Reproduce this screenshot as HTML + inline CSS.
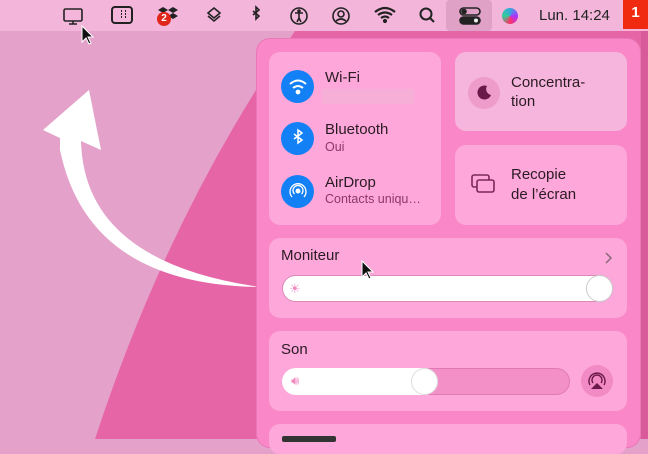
<!DOCTYPE html>
<html><head><meta charset="utf-8"><style>
*{margin:0;padding:0;box-sizing:border-box}
body{width:648px;height:439px;overflow:hidden;position:relative;font-family:"Liberation Sans",sans-serif;background:#e4a2ca}
.bar{position:absolute;left:0;top:0;width:648px;height:31px;background:#f3b6da;}
.panel{position:absolute;left:256px;top:38px;width:385px;height:410px;background:#fa88c8;border-radius:14px;border:1px solid #e978b8}
.card{position:absolute;background:#fda7da;border-radius:11px}
.t{position:absolute;color:#2a1a22;font-size:15px}
.s{position:absolute;color:#8a3a68;font-size:12.5px}
.ic{position:absolute;width:33px;height:33px;border-radius:50%;background:#1380f5}
</style></head><body>
<svg style="position:absolute;left:0;top:0" width="648" height="439">
<path d="M295,31 Q170,210 95,439 L648,439 L648,31 Z" fill="#e665a6"/>
<path d="M260,287 Q88,285 60,150 L60,138 L43,130 L89,90 L101,150 L81,141 Q84,262 260,287 Z" fill="#fff"/>
</svg>
<div class="bar"></div>
<div style="position:absolute;left:446px;top:0;width:46px;height:31px;background:#dfa2c6;border-radius:4px"></div>
<svg style="position:absolute;left:0;top:0" width="648" height="31" fill="none" stroke="#222" stroke-width="1.6">
<rect x="64" y="9" width="18" height="12" rx="1.5"/><path d="M73 21v3M69 24h8"/>
<rect x="112" y="7" width="20" height="16" rx="3" stroke-width="2"/><path d="M121 11h1M125 11h1M125 14h1M125 17h1M121 17h1M121 14h1" stroke-width="2"/>
<path d="M163 7l5 3-5 3-5-3zM173 7l5 3-5 3-5-3zM163 13l5 3-5 3-5-3zM173 13l5 3-5 3-5-3z" fill="#222" stroke="none"/>
<path d="M214 8l6 5-6 5-6-5zM208 16l6 5 6-5"/>
<path d="M253 11l6 5-3 3V7l3 3-6 5"/>
<circle cx="299" cy="16" r="8"/><path d="M295 13h8M299 13v5l-2 4M299 18l2 4"/><circle cx="299" cy="11" r="1" fill="#222"/>
<circle cx="341" cy="16" r="8"/><circle cx="341" cy="14" r="3"/><path d="M336 21q5-4 10 0"/>
<path d="M375 12q10-8 20 0M378 15q7-5 14 0M381 18q4-3 8 0" stroke-width="2.2"/><circle cx="385" cy="21" r="1.3" fill="#222"/>
<circle cx="426" cy="14" r="5.5" stroke-width="2"/><path d="M430 18l4 4" stroke-width="2"/>
<rect x="460" y="8" width="20" height="7" rx="3.5"/><rect x="460" y="17" width="20" height="7" rx="3.5" fill="#222"/><circle cx="464" cy="11.5" r="2" fill="#222"/><circle cx="476" cy="20.5" r="2" fill="#eee" stroke="none"/>
</svg>
<div style="position:absolute;left:157px;top:12px;width:14px;height:14px;border-radius:50%;background:#e0261a;color:#fff;font-size:10px;font-weight:bold;text-align:center;line-height:14px">2</div>
<div style="position:absolute;left:502px;top:8px;width:16px;height:16px;border-radius:50%;background:conic-gradient(#3ad,#a3f,#f36,#3c9,#3ad)"></div>
<div style="position:absolute;left:539px;top:7px;font-size:15px;color:#222">Lun. 14:24</div>
<div style="position:absolute;left:623px;top:0;width:25px;height:29px;background:#f02a10;color:#fff;font-weight:bold;font-size:15px;text-align:center;line-height:26px">1</div>
<div style="position:absolute;left:641px;top:31px;width:7px;height:408px;background:#d85a9a"></div>
<div class="panel"></div>
<div class="card" style="left:269px;top:52px;width:172px;height:173px"></div>
<div class="card" style="left:455px;top:52px;width:172px;height:79px;background:#f6b5dc"></div>
<div class="card" style="left:455px;top:145px;width:172px;height:80px"></div>
<div class="card" style="left:269px;top:238px;width:358px;height:80px"></div>
<div class="card" style="left:269px;top:331px;width:358px;height:80px"></div>
<div class="card" style="left:269px;top:424px;width:358px;height:30px"></div>
<div style="position:absolute;left:282px;top:436px;width:54px;height:6px;background:#333;border-radius:2px"></div>
<div class="ic" style="left:281px;top:70px"></div>
<div class="ic" style="left:281px;top:122px"></div>
<div class="ic" style="left:281px;top:175px"></div>
<svg style="position:absolute;left:0;top:0" width="648" height="439" fill="none" stroke="#fff" stroke-width="2">
<path d="M290 84q8-7 16 0M293 88q5-4 10 0"/><circle cx="298" cy="92" r="1.4" fill="#fff"/>
<path d="M294 134l8 6-4 3v-13l4 3-8 6" stroke-width="1.5"/>
<path d="M292 197a8 8 0 1 1 12 0M294.5 194a5 5 0 1 1 7 0" stroke-width="1.3"/><circle cx="298" cy="191" r="1.5" fill="#fff"/>
<circle cx="484" cy="93" r="16" fill="#ee9cc9" stroke="none"/>
<path d="M487 86a7 7 0 1 0 4 9a6 6 0 0 1-4-9z" fill="#6a1a48" stroke="none"/>
<rect x="472" y="175" width="17" height="12" rx="2" stroke="#7a2a58" stroke-width="1.6"/><rect x="477" y="180" width="17" height="12" rx="2" stroke="#7a2a58" stroke-width="1.6" fill="#fda7da"/>
<path d="M606 253l5 5-5 5" stroke="#8a6a7a" stroke-width="1.5"/>
<circle cx="597" cy="381" r="16" fill="#f28ac5" stroke="none"/>
<path d="M590 385a8 8 0 1 1 14 0M593 383a5 5 0 1 1 8 0" stroke="#6a1a48" stroke-width="1.4"/><path d="M591 389l6-6 6 6z" fill="#6a1a48" stroke="none"/>
</svg>
<div class="t" style="left:325px;top:69px">Wi-Fi</div>
<div style="position:absolute;left:322px;top:89px;width:92px;height:15px;background:#f6b0d8"></div>
<div class="t" style="left:325px;top:121px">Bluetooth</div>
<div class="s" style="left:325px;top:140px">Oui</div>
<div class="t" style="left:325px;top:174px">AirDrop</div>
<div class="s" style="left:325px;top:192px">Contacts uniqu…</div>
<div class="t" style="left:511px;top:73px;line-height:19px">Concentra-<br>tion</div>
<div class="t" style="left:511px;top:165px;line-height:20px">Recopie<br>de l’écran</div>
<div class="t" style="left:281px;top:247px">Moniteur</div>
<div style="position:absolute;left:282px;top:275px;width:331px;height:27px;border-radius:14px;background:#fff;border:1px solid #d98ab5"></div>
<div style="position:absolute;left:586px;top:275px;width:27px;height:27px;border-radius:50%;background:#fff;border:1px solid #ccc"></div>
<div style="position:absolute;left:289px;top:281px;color:#f08ac0;font-size:13px">☀</div>
<div class="t" style="left:281px;top:341px">Son</div>
<div style="position:absolute;left:282px;top:368px;width:288px;height:27px;border-radius:14px;background:#f390c8;border:1px solid #e07ab5"></div>
<div style="position:absolute;left:282px;top:368px;width:156px;height:27px;border-radius:14px;background:#fff"></div>
<div style="position:absolute;left:411px;top:368px;width:27px;height:27px;border-radius:50%;background:#fff;border:1px solid #ddd"></div>
<div style="position:absolute;left:291px;top:373px;color:#f08ac0;font-size:13px">🔊︎</div>
<svg style="position:absolute;left:0;top:0" width="648" height="439">
<path d="M82 26v16l4-4 3 6 2-1-3-6h5z" fill="#111" stroke="#fff" stroke-width="1"/>
<path d="M362 261v16l4-4 3 6 2-1-3-6h5z" fill="#111" stroke="#fff" stroke-width="1"/>
</svg>
</body></html>
